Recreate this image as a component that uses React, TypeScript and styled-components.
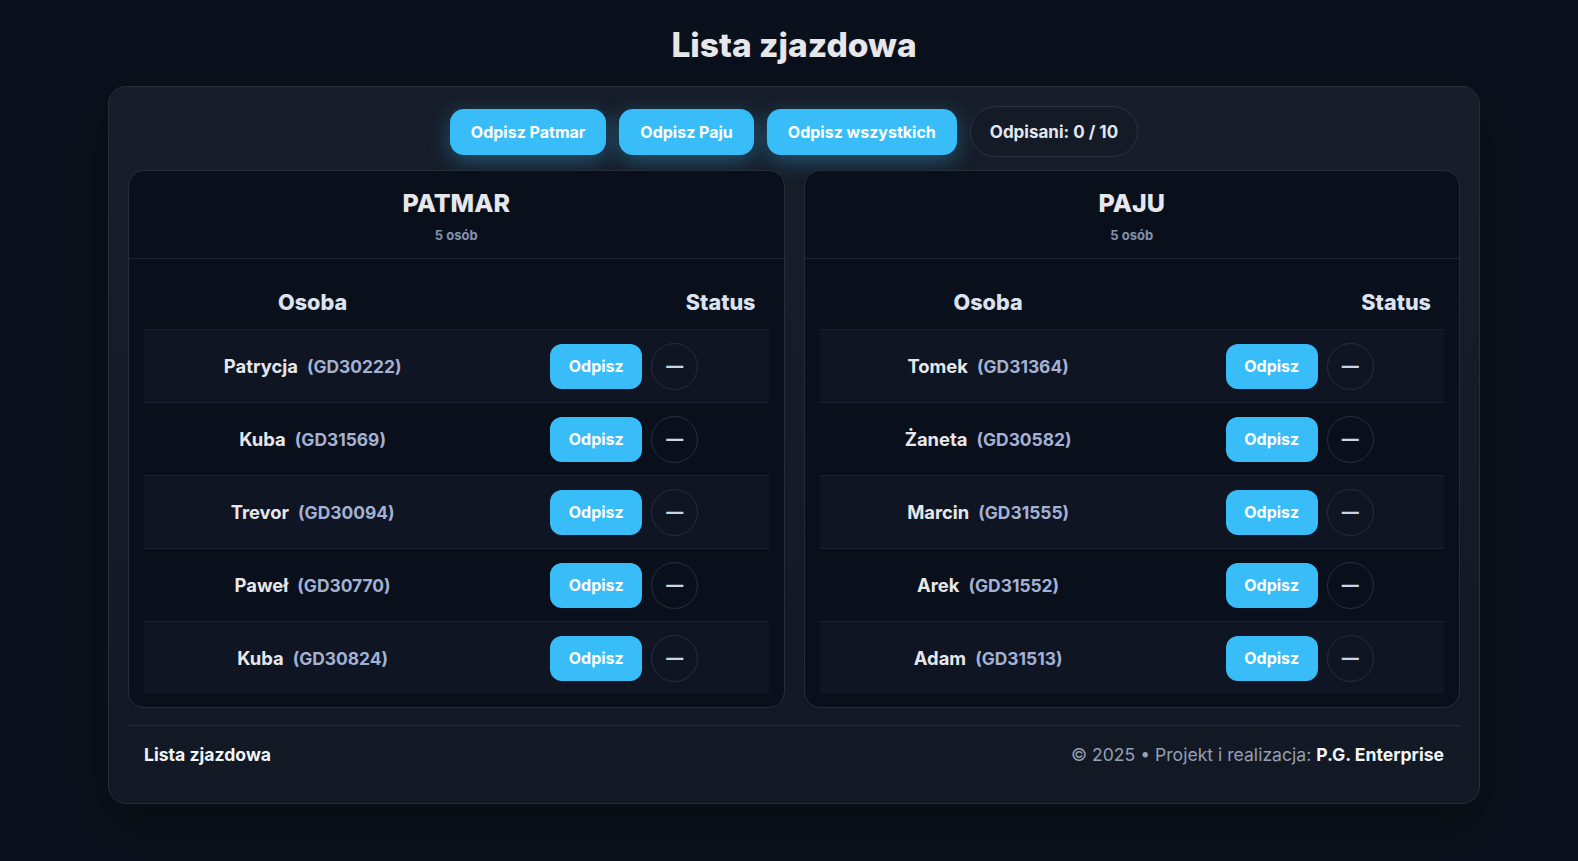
import React from 'react';
import styled, { createGlobalStyle } from 'styled-components';

const GlobalStyle = createGlobalStyle`
  html, body {
    margin: 0;
    padding: 0;
    background: #0b111c;
  }
  body {
    font-family: Inter, "Noto Sans", "Liberation Sans", sans-serif;
    color: #e5e7eb;
  }
  * { box-sizing: border-box; }
`;

const Page = styled.div`
  min-height: 861px;
  padding: 25px 0 40px;
`;

const PageTitle = styled.h1`
  margin: 0 0 20px;
  text-align: center;
  font-size: 33.5px;
  line-height: 41px;
  font-weight: 800;
  color: #e5e7eb;
  padding-left: 10px;
`;

const Card = styled.div`
  width: 1372px;
  margin-left: 108px;
  padding: 19px 19px 20px;
  border: 1px solid #262e3c;
  border-radius: 18px;
  background: linear-gradient(180deg, #171d29 0%, #121824 100%);
  box-shadow: 0 20px 60px rgba(0, 0, 0, 0.35);
`;

const Toolbar = styled.div`
  display: flex;
  justify-content: center;
  align-items: center;
  gap: 13px;
  margin-bottom: 13px;
`;

const GlowButton = styled.button`
  height: 46px;
  padding: 0 21px;
  border: none;
  border-radius: 14px;
  background: #38bdf8;
  color: #ffffff;
  font-family: inherit;
  font-size: 16px;
  font-weight: 700;
  box-shadow: 0 6px 22px rgba(56, 189, 248, 0.35);
  cursor: pointer;
`;

const Counter = styled.div`
  height: 51px;
  display: flex;
  align-items: center;
  padding: 0 19px;
  border: 1px solid #2a3343;
  border-radius: 999px;
  background: #141a26;
  color: #e2e8f0;
  font-size: 17px;
  font-weight: 700;
`;

const Panels = styled.div`
  display: grid;
  grid-template-columns: 1fr 1fr;
  gap: 19px;
`;

const Panel = styled.section`
  border: 1px solid #252d3b;
  border-radius: 16px;
  background: #0a0f1c;
  overflow: hidden;
`;

const PanelHeader = styled.header`
  padding: 17px 0 15px;
  text-align: center;
  border-bottom: 1px solid #1f2735;
`;

const PanelTitle = styled.h2`
  margin: 0;
  font-size: 25px;
  line-height: 30px;
  font-weight: 800;
  color: #e5e7eb;
`;

const PanelCount = styled.div`
  margin-top: 9px;
  font-size: 13px;
  line-height: 16px;
  font-weight: 700;
  color: #8491ab;
`;

const Table = styled.div`
  margin: 15px 15px 13px;
`;

const HeadRow = styled.div`
  display: grid;
  grid-template-columns: 54% 46%;
  height: 55px;
  align-items: center;
  font-size: 21.6px;
  font-weight: 800;
  color: #dbe3f0;
`;

const HeadCell = styled.div<{ align: 'center' | 'right' }>`
  text-align: ${({ align }) => align};
  padding-right: ${({ align }) => (align === 'right' ? '13px' : '0')};
`;

const Row = styled.div<{ shaded: boolean }>`
  display: grid;
  grid-template-columns: 54% 46%;
  height: 73px;
  align-items: center;
  border-top: 1px solid #1a2130;
  background: ${({ shaded }) => (shaded ? '#0f1522' : '#0a0f1c')};
`;

const NameCell = styled.div`
  text-align: center;
  font-size: 18.4px;
  font-weight: 700;
  color: #e5e7eb;
`;

const Code = styled.span`
  margin-left: 9px;
  font-size: 17.4px;
  font-weight: 700;
  color: #a3b2d4;
`;

const StatusCell = styled.div`
  display: flex;
  align-items: center;
  gap: 9px;
  padding-left: 69px;
`;

const RowButton = styled.button`
  width: 92px;
  height: 45px;
  border: none;
  border-radius: 12px;
  background: #38bdf8;
  color: #ffffff;
  font-family: inherit;
  font-size: 16px;
  font-weight: 700;
  cursor: pointer;
`;

const StatusDot = styled.div`
  width: 47px;
  height: 47px;
  border-radius: 50%;
  border: 1px solid #262f3e;
  display: flex;
  align-items: center;
  justify-content: center;
  color: #cbd5e1;
  font-size: 17px;
  font-weight: 800;
`;

const Footer = styled.footer`
  display: flex;
  justify-content: space-between;
  align-items: center;
  margin-top: 17px;
  padding: 18px 16px 17px;
  border-top: 1px solid #242c3a;
  font-size: 17.6px;
  line-height: 22px;
`;

const FooterBrand = styled.div`
  font-weight: 700;
  color: #f1f5f9;
`;

const FooterCredit = styled.div`
  color: #94a0b4;
  b {
    color: #f1f5f9;
    font-weight: 700;
  }
`;

interface Person {
  name: string;
  code: string;
}

interface Group {
  title: string;
  people: Person[];
}

const groups: Group[] = [
  {
    title: 'PATMAR',
    people: [
      { name: 'Patrycja', code: 'GD30222' },
      { name: 'Kuba', code: 'GD31569' },
      { name: 'Trevor', code: 'GD30094' },
      { name: 'Paweł', code: 'GD30770' },
      { name: 'Kuba', code: 'GD30824' },
    ],
  },
  {
    title: 'PAJU',
    people: [
      { name: 'Tomek', code: 'GD31364' },
      { name: 'Żaneta', code: 'GD30582' },
      { name: 'Marcin', code: 'GD31555' },
      { name: 'Arek', code: 'GD31552' },
      { name: 'Adam', code: 'GD31513' },
    ],
  },
];

const GroupPanel = ({ group }: { group: Group }) => (
  <Panel>
    <PanelHeader>
      <PanelTitle>{group.title}</PanelTitle>
      <PanelCount>{group.people.length} osób</PanelCount>
    </PanelHeader>
    <Table>
      <HeadRow>
        <HeadCell align="center">Osoba</HeadCell>
        <HeadCell align="right">Status</HeadCell>
      </HeadRow>
      {group.people.map((p, i) => (
        <Row key={p.code} shaded={i % 2 === 0}>
          <NameCell>
            {p.name}
            <Code>({p.code})</Code>
          </NameCell>
          <StatusCell>
            <RowButton>Odpisz</RowButton>
            <StatusDot>—</StatusDot>
          </StatusCell>
        </Row>
      ))}
    </Table>
  </Panel>
);

export default function App() {
  const total = groups.reduce((n, g) => n + g.people.length, 0);

  return (
    <Page>
      <GlobalStyle />
      <PageTitle>Lista zjazdowa</PageTitle>
      <Card>
        <Toolbar>
          <GlowButton>Odpisz Patmar</GlowButton>
          <GlowButton>Odpisz Paju</GlowButton>
          <GlowButton>Odpisz wszystkich</GlowButton>
          <Counter>Odpisani: 0 / {total}</Counter>
        </Toolbar>
        <Panels>
          {groups.map((g) => (
            <GroupPanel key={g.title} group={g} />
          ))}
        </Panels>
        <Footer>
          <FooterBrand>Lista zjazdowa</FooterBrand>
          <FooterCredit>
            © 2025 • Projekt i realizacja: <b>P.G. Enterprise</b>
          </FooterCredit>
        </Footer>
      </Card>
    </Page>
  );
}
